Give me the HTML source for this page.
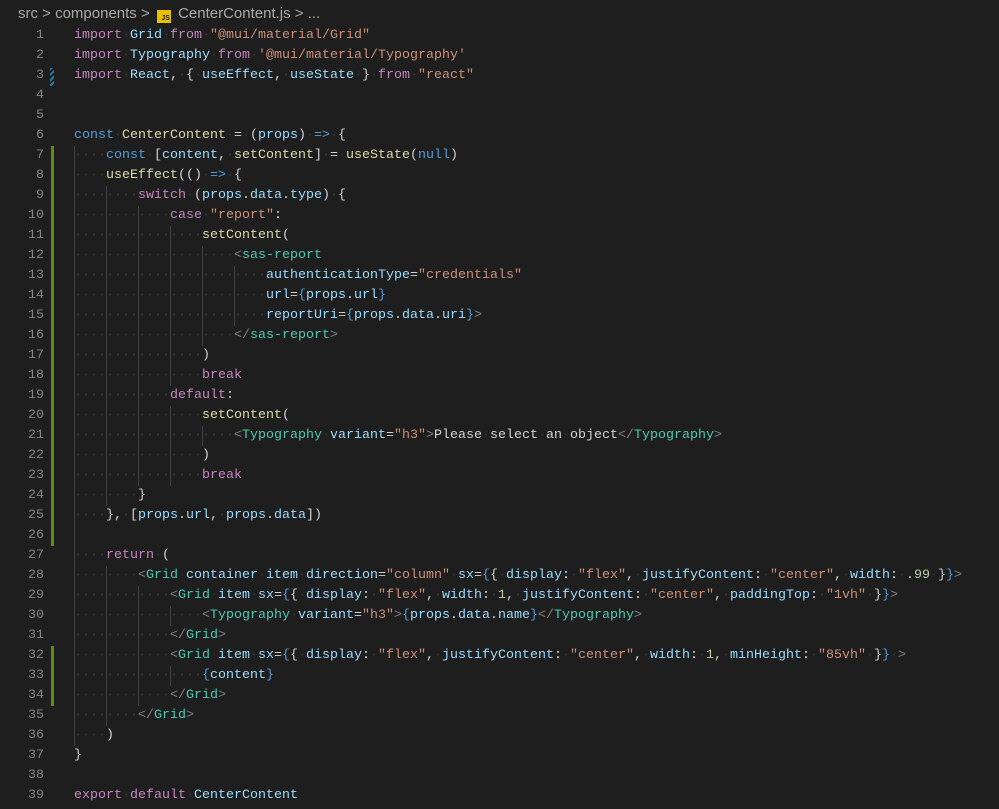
<!DOCTYPE html>
<html><head><meta charset="utf-8"><style>
html,body{margin:0;padding:0;background:#1e1e1e;width:999px;height:809px;overflow:hidden}
body{font-family:"Liberation Mono",monospace;font-size:13.33px;color:#d4d4d4;position:relative}
.bc{position:absolute;left:18px;top:5px;font-family:"Liberation Sans",sans-serif;font-size:15px;color:#a9a9a9;white-space:pre}
.js{display:inline-block;width:14px;height:13px;background:#e8c000;color:#1e1e1e;font-size:7px;font-weight:bold;text-align:right;line-height:17px;vertical-align:-2px;box-sizing:border-box;padding-right:1px;margin:0 3px 0 3px}
.ln{position:absolute;left:0;width:44px;text-align:right;color:#858585;height:20px;line-height:20px}
.c{position:absolute;left:74px;height:20px;line-height:20px;white-space:pre}
.i{display:inline-block;width:32px;box-shadow:inset 1px 0 0 #404040;height:20px;vertical-align:top;color:#3a3a3a}
.d{color:#3a3a3a}
.k{color:#c586c0}.b{color:#569cd6}.v{color:#9cdcfe}.s{color:#ce9178}.f{color:#dcdcaa}.t{color:#4ec9b0}.g{color:#808080}.n{color:#b5cea8}
.gb{position:absolute;left:51px;width:3px;background:#5a8f14}
</style></head><body>
<div class="bc">src &gt; components &gt; <span class="js">JS</span> CenterContent.js &gt; ...</div>
<div class="gb" style="top:146px;height:400px"></div>
<div class="gb" style="top:646px;height:60px"></div>
<div style="position:absolute;left:50px;top:68px;width:4px;height:18px;background:repeating-linear-gradient(135deg,#1b81a8 0 2px,transparent 2px 4px)"></div>

<div class="ln" style="top:26px">1</div><div class="c" style="top:26px"><span class="k">import</span><span class="d">·</span><span class="v">Grid</span><span class="d">·</span><span class="k">from</span><span class="d">·</span><span class="s">"@mui/material/Grid"</span></div>
<div class="ln" style="top:46px">2</div><div class="c" style="top:46px"><span class="k">import</span><span class="d">·</span><span class="v">Typography</span><span class="d">·</span><span class="k">from</span><span class="d">·</span><span class="s">'@mui/material/Typography'</span></div>
<div class="ln" style="top:66px">3</div><div class="c" style="top:66px"><span class="k">import</span><span class="d">·</span><span class="v">React</span>,<span class="d">·</span>{<span class="d">·</span><span class="v">useEffect</span>,<span class="d">·</span><span class="v">useState</span><span class="d">·</span>}<span class="d">·</span><span class="k">from</span><span class="d">·</span><span class="s">"react"</span></div>
<div class="ln" style="top:86px">4</div>
<div class="ln" style="top:106px">5</div>
<div class="ln" style="top:126px">6</div><div class="c" style="top:126px"><span class="b">const</span><span class="d">·</span><span class="f">CenterContent</span><span class="d">·</span>=<span class="d">·</span>(<span class="v">props</span>)<span class="d">·</span><span class="b">=&gt;</span><span class="d">·</span>{</div>
<div class="ln" style="top:146px">7</div><div class="c" style="top:146px"><span class="i">····</span><span class="b">const</span><span class="d">·</span>[<span class="v">content</span>,<span class="d">·</span><span class="f">setContent</span>]<span class="d">·</span>=<span class="d">·</span><span class="f">useState</span>(<span class="b">null</span>)</div>
<div class="ln" style="top:166px">8</div><div class="c" style="top:166px"><span class="i">····</span><span class="f">useEffect</span>(()<span class="d">·</span><span class="b">=&gt;</span><span class="d">·</span>{</div>
<div class="ln" style="top:186px">9</div><div class="c" style="top:186px"><span class="i">····</span><span class="i">····</span><span class="k">switch</span><span class="d">·</span>(<span class="v">props</span>.<span class="v">data</span>.<span class="v">type</span>)<span class="d">·</span>{</div>
<div class="ln" style="top:206px">10</div><div class="c" style="top:206px"><span class="i">····</span><span class="i">····</span><span class="i">····</span><span class="k">case</span><span class="d">·</span><span class="s">"report"</span>:</div>
<div class="ln" style="top:226px">11</div><div class="c" style="top:226px"><span class="i">····</span><span class="i">····</span><span class="i">····</span><span class="i">····</span><span class="f">setContent</span>(</div>
<div class="ln" style="top:246px">12</div><div class="c" style="top:246px"><span class="i">····</span><span class="i">····</span><span class="i">····</span><span class="i">····</span><span class="i">····</span><span class="g">&lt;</span><span class="t">sas-report</span></div>
<div class="ln" style="top:266px">13</div><div class="c" style="top:266px"><span class="i">····</span><span class="i">····</span><span class="i">····</span><span class="i">····</span><span class="i">····</span><span class="i">····</span><span class="v">authenticationType</span>=<span class="s">"credentials"</span></div>
<div class="ln" style="top:286px">14</div><div class="c" style="top:286px"><span class="i">····</span><span class="i">····</span><span class="i">····</span><span class="i">····</span><span class="i">····</span><span class="i">····</span><span class="v">url</span>=<span class="b">{</span><span class="v">props</span>.<span class="v">url</span><span class="b">}</span></div>
<div class="ln" style="top:306px">15</div><div class="c" style="top:306px"><span class="i">····</span><span class="i">····</span><span class="i">····</span><span class="i">····</span><span class="i">····</span><span class="i">····</span><span class="v">reportUri</span>=<span class="b">{</span><span class="v">props</span>.<span class="v">data</span>.<span class="v">uri</span><span class="b">}</span><span class="g">&gt;</span></div>
<div class="ln" style="top:326px">16</div><div class="c" style="top:326px"><span class="i">····</span><span class="i">····</span><span class="i">····</span><span class="i">····</span><span class="i">····</span><span class="g">&lt;/</span><span class="t">sas-report</span><span class="g">&gt;</span></div>
<div class="ln" style="top:346px">17</div><div class="c" style="top:346px"><span class="i">····</span><span class="i">····</span><span class="i">····</span><span class="i">····</span>)</div>
<div class="ln" style="top:366px">18</div><div class="c" style="top:366px"><span class="i">····</span><span class="i">····</span><span class="i">····</span><span class="i">····</span><span class="k">break</span></div>
<div class="ln" style="top:386px">19</div><div class="c" style="top:386px"><span class="i">····</span><span class="i">····</span><span class="i">····</span><span class="k">default</span>:</div>
<div class="ln" style="top:406px">20</div><div class="c" style="top:406px"><span class="i">····</span><span class="i">····</span><span class="i">····</span><span class="i">····</span><span class="f">setContent</span>(</div>
<div class="ln" style="top:426px">21</div><div class="c" style="top:426px"><span class="i">····</span><span class="i">····</span><span class="i">····</span><span class="i">····</span><span class="i">····</span><span class="g">&lt;</span><span class="t">Typography</span><span class="d">·</span><span class="v">variant</span>=<span class="s">"h3"</span><span class="g">&gt;</span>Please<span class="d">·</span>select<span class="d">·</span>an<span class="d">·</span>object<span class="g">&lt;/</span><span class="t">Typography</span><span class="g">&gt;</span></div>
<div class="ln" style="top:446px">22</div><div class="c" style="top:446px"><span class="i">····</span><span class="i">····</span><span class="i">····</span><span class="i">····</span>)</div>
<div class="ln" style="top:466px">23</div><div class="c" style="top:466px"><span class="i">····</span><span class="i">····</span><span class="i">····</span><span class="i">····</span><span class="k">break</span></div>
<div class="ln" style="top:486px">24</div><div class="c" style="top:486px"><span class="i">····</span><span class="i">····</span>}</div>
<div class="ln" style="top:506px">25</div><div class="c" style="top:506px"><span class="i">····</span>},<span class="d">·</span>[<span class="v">props</span>.<span class="v">url</span>,<span class="d">·</span><span class="v">props</span>.<span class="v">data</span>])</div>
<div class="ln" style="top:526px">26</div><div class="c" style="top:526px"><span class="i"> </span></div>
<div class="ln" style="top:546px">27</div><div class="c" style="top:546px"><span class="i">····</span><span class="k">return</span><span class="d">·</span>(</div>
<div class="ln" style="top:566px">28</div><div class="c" style="top:566px"><span class="i">····</span><span class="i">····</span><span class="g">&lt;</span><span class="t">Grid</span><span class="d">·</span><span class="v">container</span><span class="d">·</span><span class="v">item</span><span class="d">·</span><span class="v">direction</span>=<span class="s">"column"</span><span class="d">·</span><span class="v">sx</span>=<span class="b">{</span>{<span class="d">·</span><span class="v">display</span>:<span class="d">·</span><span class="s">"flex"</span>,<span class="d">·</span><span class="v">justifyContent</span>:<span class="d">·</span><span class="s">"center"</span>,<span class="d">·</span><span class="v">width</span>:<span class="d">·</span><span class="n">.99</span><span class="d">·</span>}<span class="b">}</span><span class="g">&gt;</span></div>
<div class="ln" style="top:586px">29</div><div class="c" style="top:586px"><span class="i">····</span><span class="i">····</span><span class="i">····</span><span class="g">&lt;</span><span class="t">Grid</span><span class="d">·</span><span class="v">item</span><span class="d">·</span><span class="v">sx</span>=<span class="b">{</span>{<span class="d">·</span><span class="v">display</span>:<span class="d">·</span><span class="s">"flex"</span>,<span class="d">·</span><span class="v">width</span>:<span class="d">·</span><span class="n">1</span>,<span class="d">·</span><span class="v">justifyContent</span>:<span class="d">·</span><span class="s">"center"</span>,<span class="d">·</span><span class="v">paddingTop</span>:<span class="d">·</span><span class="s">"1vh"</span><span class="d">·</span>}<span class="b">}</span><span class="g">&gt;</span></div>
<div class="ln" style="top:606px">30</div><div class="c" style="top:606px"><span class="i">····</span><span class="i">····</span><span class="i">····</span><span class="i">····</span><span class="g">&lt;</span><span class="t">Typography</span><span class="d">·</span><span class="v">variant</span>=<span class="s">"h3"</span><span class="g">&gt;</span><span class="b">{</span><span class="v">props</span>.<span class="v">data</span>.<span class="v">name</span><span class="b">}</span><span class="g">&lt;/</span><span class="t">Typography</span><span class="g">&gt;</span></div>
<div class="ln" style="top:626px">31</div><div class="c" style="top:626px"><span class="i">····</span><span class="i">····</span><span class="i">····</span><span class="g">&lt;/</span><span class="t">Grid</span><span class="g">&gt;</span></div>
<div class="ln" style="top:646px">32</div><div class="c" style="top:646px"><span class="i">····</span><span class="i">····</span><span class="i">····</span><span class="g">&lt;</span><span class="t">Grid</span><span class="d">·</span><span class="v">item</span><span class="d">·</span><span class="v">sx</span>=<span class="b">{</span>{<span class="d">·</span><span class="v">display</span>:<span class="d">·</span><span class="s">"flex"</span>,<span class="d">·</span><span class="v">justifyContent</span>:<span class="d">·</span><span class="s">"center"</span>,<span class="d">·</span><span class="v">width</span>:<span class="d">·</span><span class="n">1</span>,<span class="d">·</span><span class="v">minHeight</span>:<span class="d">·</span><span class="s">"85vh"</span><span class="d">·</span>}<span class="b">}</span><span class="d">·</span><span class="g">&gt;</span></div>
<div class="ln" style="top:666px">33</div><div class="c" style="top:666px"><span class="i">····</span><span class="i">····</span><span class="i">····</span><span class="i">····</span><span class="b">{</span><span class="v">content</span><span class="b">}</span></div>
<div class="ln" style="top:686px">34</div><div class="c" style="top:686px"><span class="i">····</span><span class="i">····</span><span class="i">····</span><span class="g">&lt;/</span><span class="t">Grid</span><span class="g">&gt;</span></div>
<div class="ln" style="top:706px">35</div><div class="c" style="top:706px"><span class="i">····</span><span class="i">····</span><span class="g">&lt;/</span><span class="t">Grid</span><span class="g">&gt;</span></div>
<div class="ln" style="top:726px">36</div><div class="c" style="top:726px"><span class="i">····</span>)</div>
<div class="ln" style="top:746px">37</div><div class="c" style="top:746px">}</div>
<div class="ln" style="top:766px">38</div>
<div class="ln" style="top:786px">39</div><div class="c" style="top:786px"><span class="k">export</span><span class="d">·</span><span class="k">default</span><span class="d">·</span><span class="v">CenterContent</span></div>
</body></html>
